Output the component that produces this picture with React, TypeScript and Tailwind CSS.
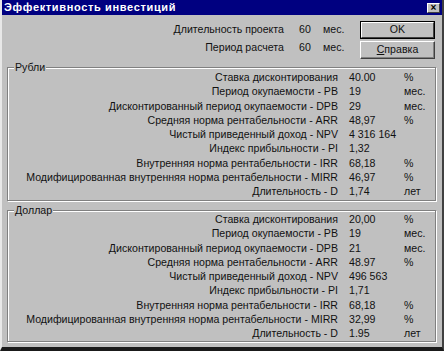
import React from 'react';

type Row = { label: string; value: string; unit: string };

const rubRows: Row[] = [
  { label: 'Ставка дисконтирования', value: '40.00', unit: '%' },
  { label: 'Период окупаемости - PB', value: '19', unit: 'мес.' },
  { label: 'Дисконтированный период окупаемости - DPB', value: '29', unit: 'мес.' },
  { label: 'Средняя норма рентабельности - ARR', value: '48,97', unit: '%' },
  { label: 'Чистый приведенный доход - NPV', value: '4 316 164', unit: '' },
  { label: 'Индекс прибыльности - PI', value: '1,32', unit: '' },
  { label: 'Внутренняя норма рентабельности - IRR', value: '68,18', unit: '%' },
  { label: 'Модифицированная внутренняя норма рентабельности - MIRR', value: '46,97', unit: '%' },
  { label: 'Длительность - D', value: '1,74', unit: 'лет' },
];

const usdRows: Row[] = [
  { label: 'Ставка дисконтирования', value: '20,00', unit: '%' },
  { label: 'Период окупаемости - PB', value: '19', unit: 'мес.' },
  { label: 'Дисконтированный период окупаемости - DPB', value: '21', unit: 'мес.' },
  { label: 'Средняя норма рентабельности - ARR', value: '48.97', unit: '%' },
  { label: 'Чистый приведенный доход - NPV', value: '496 563', unit: '' },
  { label: 'Индекс прибыльности - PI', value: '1,71', unit: '' },
  { label: 'Внутренняя норма рентабельности - IRR', value: '68,18', unit: '%' },
  { label: 'Модифицированная внутренняя норма рентабельности - MIRR', value: '32,99', unit: '%' },
  { label: 'Длительность - D', value: '1.95', unit: 'лет' },
];

function Group({ title, rows, className }: { title: string; rows: Row[]; className: string }) {
  return (
    <div className={`relative ml-[5px] mr-[6px] border border-[#808080] shadow-[1px_1px_0_#ffffff,inset_1px_1px_0_#ffffff] ${className}`}>
      <span className="absolute left-[6px] top-[-7px] bg-[#c0c0c0] px-[1px] leading-[12px]">{title}</span>
      <div className="grid grid-cols-[341px_55px_1fr]">
        {rows.map((r) => (
          <React.Fragment key={r.label}>
            <div className="h-[14.25px] leading-[14.25px] text-right pr-[11px] whitespace-nowrap">{r.label}</div>
            <div className="h-[14.25px] leading-[14.25px] whitespace-nowrap">{r.value}</div>
            <div className="h-[14.25px] leading-[14.25px] whitespace-nowrap">{r.unit}</div>
          </React.Fragment>
        ))}
      </div>
    </div>
  );
}

export default function App() {
  return (
    <div className="w-[444px] h-[351px] overflow-hidden bg-[#c0c0c0] flex flex-col border-l-2 border-l-[#e8e8e8] border-r-2 border-r-[#404040] border-b-4 border-b-[#1a1a1a] font-['Liberation_Sans',Arial,sans-serif] text-[10.6px] text-[#111]">
      {/* Title bar */}
      <div className="h-[15px] -ml-[2px] bg-[#000080] flex items-center justify-between pl-[4px] pr-[2px]">
        <span className="text-white font-bold text-[11px] tracking-[0.65px] leading-[15px]">Эффективность инвестиций</span>
        <div className="w-[13px] h-[10px] bg-[#c0c0c0] border border-t-white border-l-white border-r-[#404040] border-b-[#404040] flex items-center justify-center text-[10px] leading-[8px] font-bold text-black">
          ×
        </div>
      </div>

      {/* Top section */}
      <div className="h-[47px] flex pt-[6px] pr-[7px]">
        <div className="flex-1 flex flex-col">
          <div className="h-[18px] flex items-center justify-end">
            <span>Длительность проекта</span>
            <span className="w-[24px] ml-[15px]">60</span>
            <span className="w-[37px]">мес.</span>
          </div>
          <div className="h-[18px] flex items-center justify-end">
            <span>Период расчета</span>
            <span className="w-[24px] ml-[15px]">60</span>
            <span className="w-[37px]">мес.</span>
          </div>
        </div>
        <div className="w-[75px] flex flex-col gap-[2px]">
          <div className="h-[18px] border border-black">
            <div className="h-full border border-t-white border-l-white border-r-[#404040] border-b-[#404040] flex items-center justify-center">
              OK
            </div>
          </div>
          <div className="h-[18px] border border-t-white border-l-white border-r-[#404040] border-b-[#404040] shadow-[inset_-1px_-1px_0_#808080] flex items-center justify-center">
            <span><span className="underline">С</span>правка</span>
          </div>
        </div>
      </div>

      <Group title="Рубли" rows={rubRows} className="mt-[5px] h-[134px] pt-[2px]" />
      <Group title="Доллар" rows={usdRows} className="mt-[9px] h-[132px] pt-[1px]" />
    </div>
  );
}
